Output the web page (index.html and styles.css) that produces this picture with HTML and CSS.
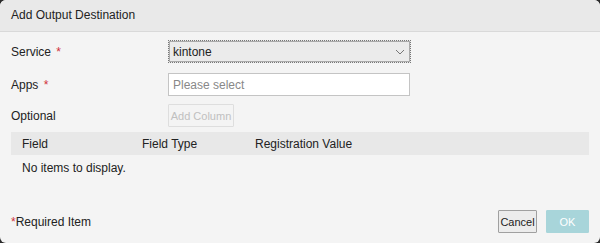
FILE: index.html
```html
<!DOCTYPE html>
<html lang="en">
<head>
  <meta charset="UTF-8">
  <title>Add Output Destination</title>
  <link rel="stylesheet" href="styles.css">
</head>
<body>
  <section class="dialog">
    <header class="dialog-head">Add Output Destination</header>

    <div class="dialog-body">
      <div class="form-row">
        <label class="form-label">Service <span class="req">*</span></label>
        <div class="select">
          <span>kintone</span>
          <svg class="chevron" width="10" height="6" viewBox="0 0 10 6">
            <path d="M1 1 L5 5 L9 1" fill="none" stroke="#777" stroke-width="1"/>
          </svg>
        </div>
      </div>

      <div class="form-row">
        <label class="form-label">Apps <span class="req">*</span></label>
        <input class="text-input" type="text" placeholder="Please select">
      </div>

      <div class="form-row">
        <label class="form-label">Optional</label>
        <button class="btn btn-disabled" disabled>Add Column</button>
      </div>

      <div class="grid">
        <div class="grid-head">
          <span class="col-field">Field</span>
          <span class="col-type">Field Type</span>
          <span class="col-value">Registration Value</span>
        </div>
        <div class="grid-empty">No items to display.</div>
      </div>
    </div>

    <footer class="dialog-foot">
      <span class="note"><span class="req">*</span>Required Item</span>
      <div class="actions">
        <button class="btn btn-cancel">Cancel</button>
        <button class="btn btn-ok">OK</button>
      </div>
    </footer>
  </section>
</body>
</html>
```

FILE: styles.css
```css
html {
  background: #2b2b2b;
}

body {
  margin: 0;
  font-family: 'Liberation Sans', Arial, sans-serif;
  font-size: 12px;
  color: #222;
}

.dialog {
  width: 600px;
  height: 243px;
  background: #f4f4f4;
  border-radius: 6px;
  overflow: hidden;
  display: flex;
  flex-direction: column;
}

.dialog-head {
  height: 31px;
  line-height: 31px;
  padding-left: 11px;
  font-size: 12px;
  background: #e9e9e9;
  border-bottom: 1px solid #d9d9d9;
}

.dialog-body {
  padding: 8px 11px 0;
  flex: 1;
}

.form-row {
  display: flex;
  align-items: center;
  margin-bottom: 10px;
}
.form-row:nth-child(2) {
  margin-bottom: 8px;
}
.form-row:nth-child(3) {
  margin-bottom: 5px;
}

.form-label {
  width: 157px;
}

.req {
  color: #d0303a;
  margin-left: 2px;
}
.note .req {
  margin: 0;
}

.select {
  width: 237px;
  height: 21px;
  padding: 0 0 0 4px;
  display: flex;
  align-items: center;
  justify-content: space-between;
  background: #ebebeb;
  border: 1px dotted #777;
  outline: 1px solid #aaa;
  outline-offset: -2px;
}
.chevron {
  margin-right: 5px;
}

.text-input {
  box-sizing: border-box;
  width: 242px;
  height: 23px;
  margin: 0;
  padding: 0 4px;
  border: 1px solid #c4c4c4;
  background: #fff;
  font: inherit;
}
.text-input::placeholder {
  color: #888;
}

.btn {
  box-sizing: border-box;
  height: 23px;
  padding: 0 4px;
  font-family: inherit;
  font-size: 11px;
  border-radius: 1px;
}

.btn-disabled {
  width: 66px;
  padding: 0;
  background: #f4f4f4;
  border: 1px solid #dedede;
  color: #c0c0c0;
}

.grid-head {
  height: 23px;
  display: flex;
  align-items: center;
  background: #e8e8e8;
  padding-left: 11px;
}
.col-field {
  width: 120px;
}
.col-type {
  width: 113px;
}

.grid-empty {
  padding: 6px 11px;
}

.dialog-foot {
  display: flex;
  justify-content: space-between;
  align-items: center;
  padding: 0 11px 10px;
}

.actions {
  display: flex;
  gap: 9px;
}

.btn-cancel {
  background: #ececec;
  border: 1px solid #a0a0a0;
  color: #222;
  width: 39px;
  padding: 0;
}

.btn-ok {
  width: 43px;
  background: #a8d5da;
  border: 1px solid #a8d5da;
  color: #fff;
}
```
